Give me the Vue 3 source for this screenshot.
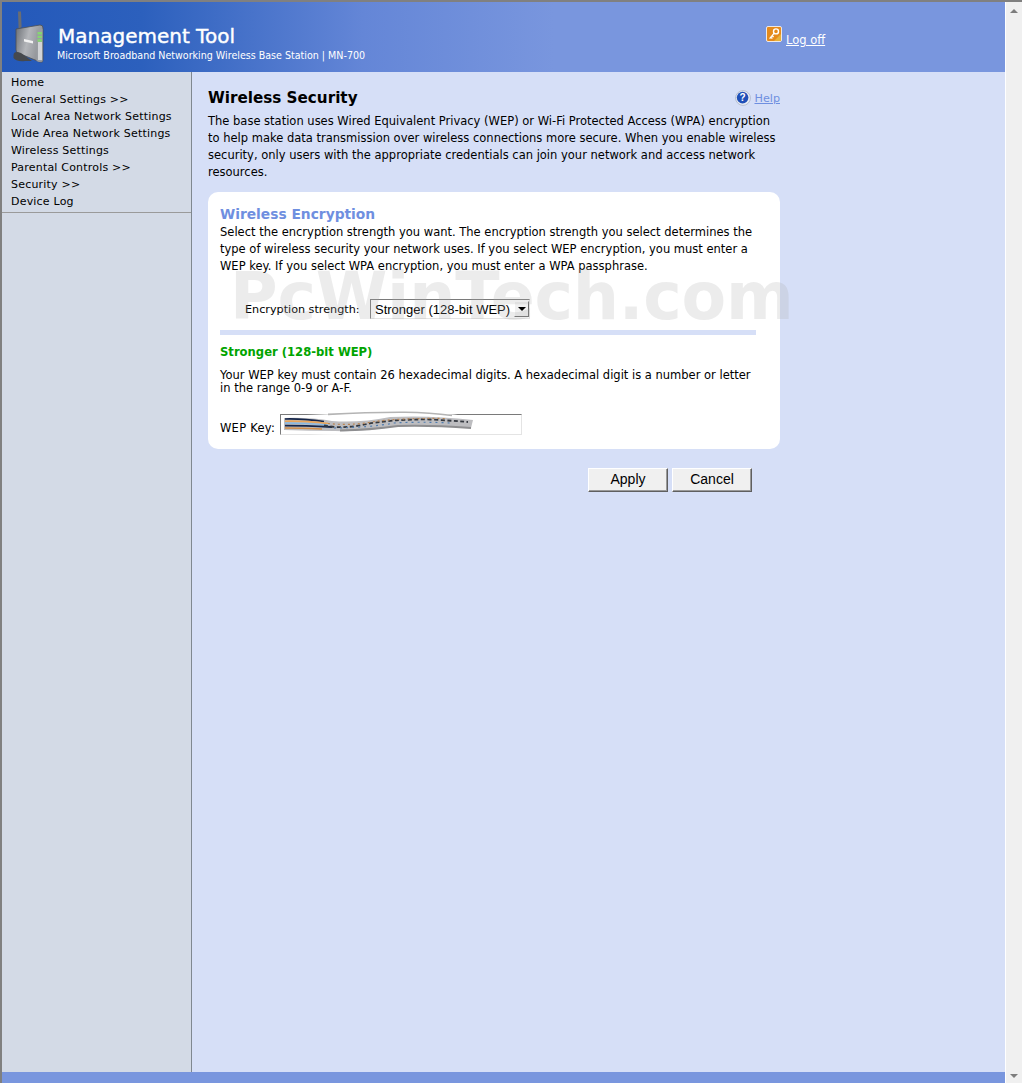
<script setup>
const navItems = ['Home', 'General Settings >>', 'Local Area Network Settings', 'Wide Area Network Settings', 'Wireless Settings', 'Parental Controls >>', 'Security >>', 'Device Log']
</script>

<template>
  <div class="window">
    <div class="page">
      <header class="header">
        <svg class="logo" width="36" height="56" viewBox="0 0 36 56">
          <defs>
            <linearGradient id="bodyGrad" x1="0" y1="0" x2="1" y2="0.3">
              <stop offset="0" stop-color="#6b6f75" />
              <stop offset="0.5" stop-color="#b4b6ba" />
              <stop offset="1" stop-color="#8d9095" />
            </linearGradient>
          </defs>
          <path d="M5 1.5 L8 1.5 L8.6 17 L5.6 19 Z" fill="#6a6d72" />
          <path d="M3 19 L27 15 Q30 15 30 18 L30 50 Q30 53 27 52 L5 43 Q3 42 3 40 Z" fill="url(#bodyGrad)" stroke="#4c4f53" stroke-width="0.8" />
          <path d="M23.5 20 L29.5 19 L29.5 51.5 L26 52 L23.5 51 Z" fill="#9a9da2" />
          <path d="M25 32 h4 v18 h-4 z" fill="#d2d4d6" />
          <path d="M24.5 22 h4.5 v2.4 h-4.5 z M24.5 25.7 h4.5 v2.4 h-4.5 z M24.5 29.3 h4.5 v2.4 h-4.5 z" fill="#86d672" />
          <path d="M11 29 L20 31 L20 33.5 L11 31.5 Z" fill="#f2f2f2" />
          <path d="M0.5 45 Q1 40 8 43 L19 51 L12 51 Q4 52 0.5 48 Z" fill="#46494d" />
        </svg>
        <div class="brand">
          <div class="brand-title">Management Tool</div>
          <div class="brand-sub">Microsoft Broadband Networking Wireless Base Station | MN-700</div>
        </div>
        <div class="logoff">
          <svg class="key" width="16" height="16" viewBox="0 0 16 16">
            <rect x="0.5" y="0.5" width="15" height="15" rx="1.5" fill="#e58a1c" stroke="#fff" stroke-width="0.8" />
            <path d="M8 15 L15 8 L15 15 Z" fill="#e8b13a" />
            <circle cx="10" cy="5.4" r="2.5" fill="none" stroke="#fff" stroke-width="1.4" />
            <path d="M8.2 7.2 L3.6 12.6 M4.8 11.2 L6.4 12.6 M6.2 9.7 L7.6 11" stroke="#fff" stroke-width="1.3" fill="none" />
          </svg>
          <a class="logoff-link">Log off</a>
        </div>
      </header>

      <div class="middle">
        <nav class="side">
          <ul class="menu">
            <li v-for="item in navItems" :key="item">{{ item }}</li>
          </ul>
        </nav>

        <main class="main">
          <div class="title-row">
            <h1>Wireless Security</h1>
            <div class="help">
              <svg width="16" height="16" viewBox="0 0 16 16">
                <circle cx="8" cy="8" r="7.4" fill="#e8ecf4" stroke="#9aa3b5" stroke-width="0.6" />
                <circle cx="7.6" cy="7.6" r="5.8" fill="#1f4fb8" />
                <text x="7.6" y="11.4" text-anchor="middle" class="help-q">?</text>
              </svg>
              <a class="help-link">Help</a>
            </div>
          </div>
          <p class="intro">The base station uses Wired Equivalent Privacy (WEP) or Wi-Fi Protected Access (WPA) encryption<br />to help make data transmission over wireless connections more secure. When you enable wireless<br />security, only users with the appropriate credentials can join your network and access network<br />resources.</p>

          <section class="card">
            <h2>Wireless Encryption</h2>
            <p class="card-text">Select the encryption strength you want. The encryption strength you select determines the<br />type of wireless security your network uses. If you select WEP encryption, you must enter a<br />WEP key. If you select WPA encryption, you must enter a WPA passphrase.</p>

            <div class="strength-row">
              <label class="strength-label">Encryption strength:</label>
              <div class="select-box">
                <select class="select">
                  <option>Stronger (128-bit WEP)</option>
                </select>
                <span class="select-arrow"></span>
              </div>
            </div>

            <div class="divider"></div>

            <h3>Stronger (128-bit WEP)</h3>
            <p class="wep-text">Your WEP key must contain 26 hexadecimal digits. A hexadecimal digit is a number or letter<br />in the range 0-9 or A-F.</p>

            <div class="key-row">
              <label class="key-label">WEP Key:</label>
              <div class="key-box">
                <svg class="smear" width="200" height="26" viewBox="0 0 200 26">
                  <path d="M2 5 Q50 3 110 0.5 Q150 0 194 6 L193 21 Q130 19 90 23 Q40 25 2 21 Z" fill="#fff" />
                  <path d="M48 3.4 Q90 1 125 1.2 Q150 1.6 172 4.5" stroke="#b4b4b4" stroke-width="1.6" fill="none" />
                  <path d="M4 7 Q30 6 52 10 Q80 12 110 6 Q150 4 193 9 L191 17 Q150 14 118 15 Q85 21 55 20 Q30 20 4 19 Z" fill="#bdbdc0" />
                  <path d="M60 19.5 Q90 19 118 15 Q150 14 191 17" stroke="#8e8e90" stroke-width="1.8" fill="none" />
                  <path d="M5 8 Q22 7.5 44 10.5" stroke="#16264a" stroke-width="1.7" fill="none" />
                  <path d="M5 10.2 Q24 9.8 48 12.5" stroke="#eaa55a" stroke-width="1.6" fill="none" />
                  <path d="M5 12 Q24 12 48 14" stroke="#86b8e4" stroke-width="1.5" fill="none" />
                  <path d="M5 14.6 Q24 14.6 52 16" stroke="#16264a" stroke-width="1.9" fill="none" />
                  <path d="M5 17 Q20 17 42 18" stroke="#d08c48" stroke-width="1.4" fill="none" />
                  <path d="M44 14.5 Q62 18 82 14 Q110 8 150 8.5 Q170 9.5 188 11" stroke="#34383f" stroke-width="1.8" stroke-dasharray="4 2.5" fill="none" />
                  <path d="M48 12.5 Q70 15 95 10.5 Q120 7 165 7.5" stroke="#bc8550" stroke-width="1.2" stroke-dasharray="2 3" fill="none" />
                  <path d="M54 17 Q90 16.5 114 12 Q140 10.5 170 12" stroke="#4f7db0" stroke-width="1.2" stroke-dasharray="2 4" fill="none" />
                </svg>
              </div>
            </div>
          </section>

          <div class="actions">
            <button class="btn" type="button">Apply</button>
            <button class="btn" type="button">Cancel</button>
          </div>

          <div class="watermark">PcWinTech.com</div>
        </main>
      </div>

      <footer class="footer"></footer>
    </div>

    <div class="scrollbar">
      <span class="arrow-up"></span>
      <span class="arrow-down"></span>
    </div>
  </div>
</template>

<style>
html, body { margin: 0; padding: 0; overflow: hidden; }
</style>

<style scoped>
.window {
  box-sizing: border-box;
  display: flex;
  width: 1022px;
  height: 1083px;
  border-top: 2px solid #808080;
  border-left: 2px solid #808080;
  font-family: "DejaVu Sans", Verdana, sans-serif;
  font-size: 11.5px;
  color: #000;
  background: #d6dff7;
}
.page {
  flex: 1;
  min-width: 0;
  display: flex;
  flex-direction: column;
}
.header {
  position: relative;
  height: 70px;
  flex: none;
  display: flex;
  background: linear-gradient(90deg, #2459ba 0%, #2c60bd 14%, #6486d7 36%, #7996de 55%, #7996de 100%);
}
.logo {
  flex: none;
  margin: 8px 0 0 11px;
}
.brand {
  margin-left: 9px;
  padding-top: 22px;
  color: #fff;
}
.brand-title {
  font-size: 20px;
  line-height: 24px;
  -webkit-text-stroke: 0.4px #fff;
}
.brand-sub {
  font-family: "DejaVu Sans Condensed", "Open Sans", sans-serif;
  font-stretch: condensed;
  font-size: 10.6px;
  line-height: 14px;
  margin-left: -1px;
}
.logoff {
  position: absolute;
  left: 764px;
  top: 24px;
  display: flex;
  align-items: flex-start;
  gap: 4px;
}
.logoff-link {
  color: #fff;
  text-decoration: underline;
  margin-top: 7px;
  line-height: 14px;
}
.middle {
  position: relative;
  flex: 1;
  display: flex;
  min-height: 0;
}
.side {
  width: 189px;
  flex: none;
  background: #d3dae6;
  border-right: 1px solid #808890;
}
.menu {
  list-style: none;
  margin: 0;
  padding: 2px 0 2px 9px;
  height: 136px;
  border-bottom: 1px solid #9a9a9a;
}
.menu li {
  font-size: 11px;
  line-height: 17px;
  height: 17px;
  white-space: nowrap;
  letter-spacing: 0.2px;
}
.main {
  flex: 1;
  padding: 15px 0 0 16px;
  min-width: 0;
}
.title-row {
  width: 572px;
  display: flex;
  justify-content: space-between;
  align-items: center;
  height: 22px;
}
h1 {
  margin: 0;
  font-size: 15.2px;
  font-weight: 700;
  line-height: 22px;
}
.help {
  display: flex;
  align-items: center;
  gap: 3px;
}
.help-q {
  fill: #fff;
  font-family: "Liberation Sans", sans-serif;
  font-size: 10px;
  font-weight: 700;
}
.help-link {
  font-size: 11.2px;
  color: #6f8fe0;
  text-decoration: underline;
}
.intro {
  margin: 4px 0 0;
  width: 580px;
  line-height: 17px;
  white-space: nowrap;
}
.card {
  position: relative;
  box-sizing: border-box;
  width: 572px;
  height: 257px;
  margin-top: 11px;
  padding: 12px 12px 0;
  background: #fff;
  border-radius: 10px;
}
h2 {
  margin: 0;
  font-size: 13.8px;
  line-height: 20px;
  font-weight: 700;
  color: #6f8fe0;
}
.card-text {
  margin: 0;
  line-height: 17px;
  white-space: nowrap;
}
.strength-row {
  display: flex;
  align-items: center;
  margin-top: 24px;
  padding-left: 25px;
  height: 20px;
}
.strength-label {
  font-size: 11.2px;
  width: 125px;
  flex: none;
}
.select-box {
  position: relative;
  width: 160px;
  height: 20px;
}
.select {
  box-sizing: border-box;
  display: block;
  width: 160px;
  height: 20px;
  margin: 0;
  padding: 0 0 0 4px;
  appearance: none;
  background: transparent;
  border: 1px solid;
  border-color: #7a7a7a #e4e4e4 #e4e4e4 #7a7a7a;
  border-radius: 0;
  font-family: "Liberation Sans", Arial, sans-serif;
  font-size: 13px;
  color: #000;
}
.select-arrow {
  position: absolute;
  right: 1px;
  top: 2px;
  box-sizing: border-box;
  width: 15px;
  height: 16px;
  background: #f0f0f0;
  border: 1px solid;
  border-color: #fff #6c6c6c #6c6c6c #fff;
}
.select-arrow::after {
  content: "";
  position: absolute;
  left: 3px;
  top: 5px;
  border-left: 4px solid transparent;
  border-right: 4px solid transparent;
  border-top: 4px solid #000;
}
.divider {
  height: 5px;
  width: 536px;
  margin-top: 11px;
  background: #d6dff7;
}
h3 {
  margin: 11px 0 0;
  font-size: 11.6px;
  line-height: 13px;
  font-weight: 700;
  color: #00a400;
}
.wep-text {
  margin: 10px 0 0;
  line-height: 13px;
  white-space: nowrap;
}
.key-row {
  display: flex;
  align-items: flex-end;
  margin-top: 19px;
}
.key-label {
  width: 60px;
  flex: none;
  line-height: 14px;
  letter-spacing: 0.25px;
}
.key-box {
  box-sizing: border-box;
  position: relative;
  width: 242px;
  height: 21px;
  background: #fff;
  border: 1px solid;
  border-color: #7a7a7a #e4e4e4 #e4e4e4 #7a7a7a;
}
.smear {
  position: absolute;
  left: -1px;
  top: -4px;
}
.actions {
  width: 544px;
  margin-top: 19px;
  display: flex;
  justify-content: flex-end;
  gap: 4px;
}
.btn {
  box-sizing: border-box;
  width: 80px;
  height: 24px;
  padding: 0 0 2px;
  font-family: "Liberation Sans", Arial, sans-serif;
  font-size: 14px;
  color: #000;
  background: #f0f0f0;
  border: 1px solid;
  border-color: #fff #5f5f5f #5f5f5f #fff;
  box-shadow: inset -1px -1px 0 #9a9a9a;
  border-radius: 0;
}
.watermark {
  position: absolute;
  left: 228px;
  top: 190px;
  font-size: 65px;
  line-height: 70px;
  font-weight: 700;
  letter-spacing: -0.25px;
  white-space: nowrap;
  color: rgba(170, 170, 170, 0.22);
  pointer-events: none;
}
.footer {
  height: 11px;
  flex: none;
  background: #7996de;
}
.scrollbar {
  position: relative;
  flex: none;
  width: 17px;
  background: #f0f0f0;
  border-left: 1px solid #fff;
  box-sizing: border-box;
}
.arrow-up, .arrow-down {
  position: absolute;
  left: 4px;
  border-left: 4px solid transparent;
  border-right: 4px solid transparent;
}
.arrow-up {
  top: 7px;
  border-bottom: 4px solid #7d7d7d;
}
.arrow-down {
  bottom: 5px;
  border-top: 4px solid #7d7d7d;
}
</style>
